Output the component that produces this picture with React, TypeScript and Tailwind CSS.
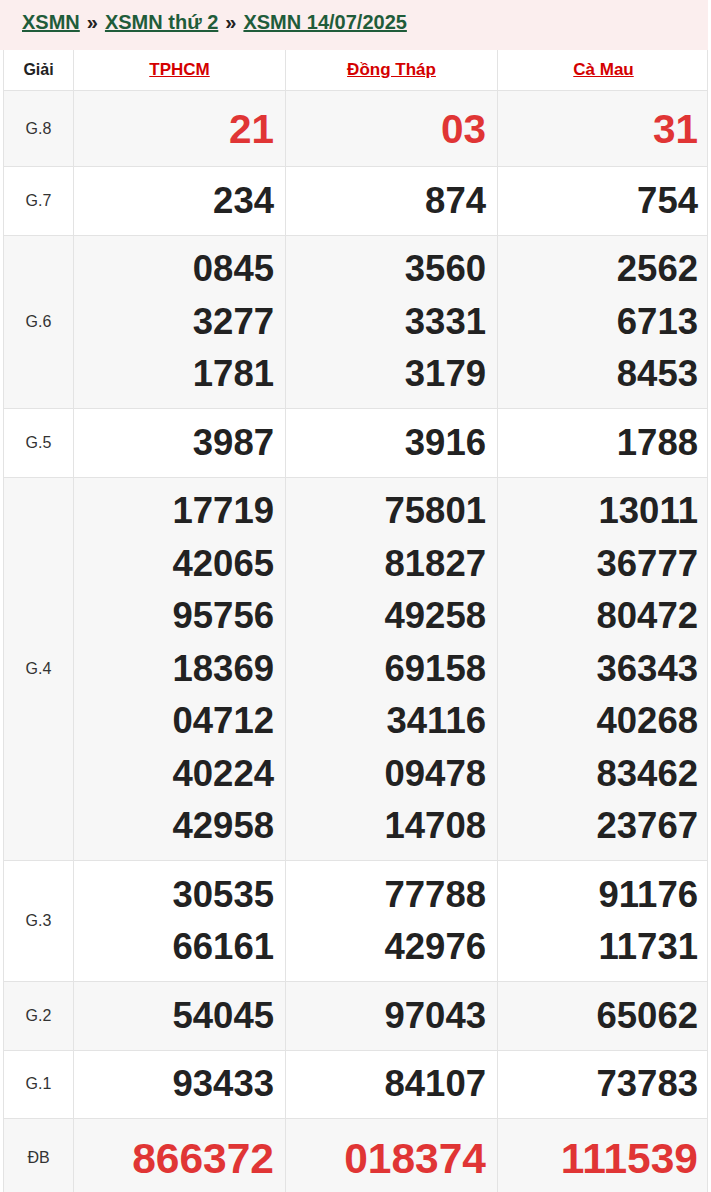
import React from "react";

type Row = { label: string; nums: string[][]; kind: "g8" | "db" | "n" };

const rows: Row[] = [
  { label: "G.8", kind: "g8", nums: [["21"], ["03"], ["31"]] },
  { label: "G.7", kind: "n", nums: [["234"], ["874"], ["754"]] },
  {
    label: "G.6",
    kind: "n",
    nums: [
      ["0845", "3277", "1781"],
      ["3560", "3331", "3179"],
      ["2562", "6713", "8453"],
    ],
  },
  { label: "G.5", kind: "n", nums: [["3987"], ["3916"], ["1788"]] },
  {
    label: "G.4",
    kind: "n",
    nums: [
      ["17719", "42065", "95756", "18369", "04712", "40224", "42958"],
      ["75801", "81827", "49258", "69158", "34116", "09478", "14708"],
      ["13011", "36777", "80472", "36343", "40268", "83462", "23767"],
    ],
  },
  {
    label: "G.3",
    kind: "n",
    nums: [
      ["30535", "66161"],
      ["77788", "42976"],
      ["91176", "11731"],
    ],
  },
  { label: "G.2", kind: "n", nums: [["54045"], ["97043"], ["65062"]] },
  { label: "G.1", kind: "n", nums: [["93433"], ["84107"], ["73783"]] },
  { label: "ĐB", kind: "db", nums: [["866372"], ["018374"], ["111539"]] },
];

const font = { fontFamily: '"Liberation Sans", Arial, sans-serif' };

export default function App() {
  return (
    <div className="w-[711px] bg-white" style={font}>
      <div className="w-[708px] h-[50px] bg-[#fbeeee] pl-[22px] pt-[8px] text-[20px] leading-[28px] font-bold text-[#222]">
        <a className="text-[#1f5c3a] underline">XSMN</a>
        <span className="mx-[7px]">»</span>
        <a className="text-[#1f5c3a] underline">XSMN thứ 2</a>
        <span className="mx-[7px]">»</span>
        <a className="text-[#1f5c3a] underline">XSMN 14/07/2025</a>
      </div>
      <div className="ml-[3px] w-[705px] border-l border-r border-[#e3e3e3]">
        <div className="grid grid-cols-[70px_212px_212px_211px] border-b border-[#e3e3e3] bg-white">
          <div className="h-[40px] flex items-center justify-center text-[16px] font-bold text-[#222] border-r border-[#e3e3e3]">
            Giải
          </div>
          {["TPHCM", "Đồng Tháp", "Cà Mau"].map((p, i) => (
            <div
              key={p}
              className={`h-[40px] flex items-center justify-center text-[17px] font-bold text-[#d40000] underline ${i < 2 ? "border-r border-[#e3e3e3]" : ""}`}
            >
              {p}
            </div>
          ))}
        </div>
        {rows.map((r, idx) => {
          const bg = idx % 2 === 0 ? "bg-[#f7f7f7]" : "bg-white";
          const numCls =
            r.kind === "g8"
              ? "text-[40.5px] leading-[60px] text-[#e03535]"
              : r.kind === "db"
              ? "text-[42.5px] leading-[63px] text-[#e03535]"
              : "text-[36.5px] leading-[52.5px] text-[#222]";
          return (
            <div
              key={r.label}
              className={`grid grid-cols-[70px_212px_212px_211px] border-b border-[#e3e3e3] ${bg}`}
            >
              <div className="flex items-center justify-center text-[16px] text-[#333] border-r border-[#e3e3e3]">
                {r.label}
              </div>
              {r.nums.map((col, i) => (
                <div
                  key={i}
                  className={`flex flex-col items-end py-[7.5px] pr-[11px] font-bold ${numCls} ${i < 2 ? "border-r border-[#e3e3e3]" : ""}`}
                >
                  {col.map((n, j) => (
                    <div key={j}>{n}</div>
                  ))}
                </div>
              ))}
            </div>
          );
        })}
      </div>
    </div>
  );
}
